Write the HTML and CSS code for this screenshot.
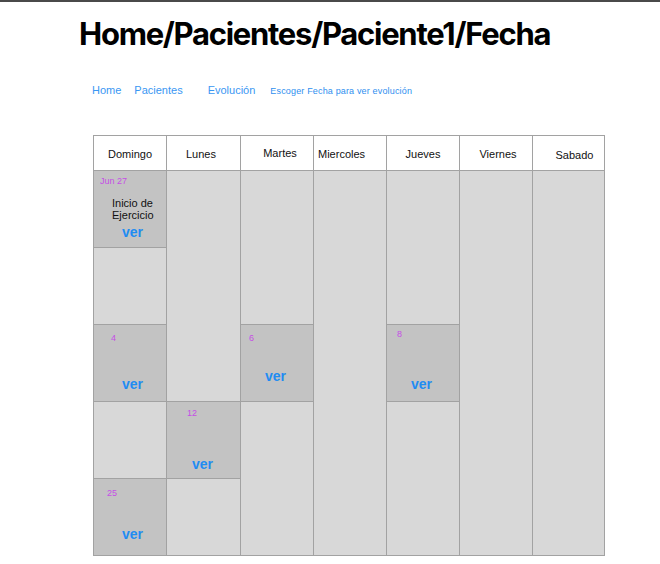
FILE: index.html
```html
<!DOCTYPE html>
<html lang="es">
<head>
<meta charset="utf-8">
<title>Fecha</title>
<link rel="stylesheet" href="styles.css">
</head>
<body>
<div class="page">
  <h1 class="title">Home/Pacientes/Paciente1/Fecha</h1>
  <nav class="crumbs">
    <a class="crumb crumb-home" href="#">Home</a>
    <a class="crumb crumb-pac" href="#">Pacientes</a>
    <a class="crumb crumb-evo" href="#">Evolución</a>
    <span class="crumb crumb-hint">Escoger Fecha para ver evolución</span>
  </nav>
  <div class="calendar">
    <div class="head h-dom">Domingo</div>
    <div class="cell day slot-jun27">
      <span class="date">Jun 27</span>
      <span class="note">Inicio de<br>Ejercicio</span>
      <a class="ver" href="#">ver</a>
    </div>
    <div class="cell"></div>
    <div class="cell day slot-4">
      <span class="date">4</span>
      <a class="ver" href="#">ver</a>
    </div>
    <div class="cell"></div>
    <div class="cell day slot-25">
      <span class="date">25</span>
      <a class="ver" href="#">ver</a>
    </div>

    <div class="head h-lun">Lunes</div>
    <div class="cell span-3"></div>
    <div class="cell day slot-12">
      <span class="date">12</span>
      <a class="ver" href="#">ver</a>
    </div>
    <div class="cell"></div>

    <div class="head h-mar">Martes</div>
    <div class="cell span-2"></div>
    <div class="cell day slot-6">
      <span class="date">6</span>
      <a class="ver" href="#">ver</a>
    </div>
    <div class="cell span-2"></div>

    <div class="head h-mie">Miercoles</div>
    <div class="cell span-5"></div>

    <div class="head h-jue">Jueves</div>
    <div class="cell span-2"></div>
    <div class="cell day slot-8">
      <span class="date">8</span>
      <a class="ver" href="#">ver</a>
    </div>
    <div class="cell span-2"></div>

    <div class="head h-vie">Viernes</div>
    <div class="cell span-5"></div>

    <div class="head h-sab">Sabado</div>
    <div class="cell span-5"></div>
  </div>
</div>
</body>
</html>
```
FILE: styles.css
```css
* { box-sizing: border-box; }

html, body {
  margin: 0;
  padding: 0;
  background: #ffffff;
}

body {
  border-top: 2px solid #4a4a4a;
  font-family: "Liberation Sans", Arial, sans-serif;
  color: #000;
}

.page {
  display: flex;
  flex-direction: column;
  align-items: flex-start;
}

.title {
  margin: 13px 0 0 79px;
  font-family: Inter, "Liberation Sans", sans-serif;
  font-weight: 700;
  font-size: 31px;
  line-height: 38px;
  letter-spacing: -1.27px;
  color: #000;
}

.crumbs {
  display: flex;
  align-items: baseline;
  margin: 31px 0 0 92px;
  line-height: 13px;
}

.crumb {
  font-size: 11px;
  color: #3a97f3;
  text-decoration: none;
}

.crumb-pac { margin-left: 13px; }
.crumb-evo { margin-left: 25px; }
.crumb-hint {
  margin-left: 15px;
  font-size: 9px;
  letter-spacing: 0.16px;
  color: #2f8fef;
}

.calendar {
  margin: 37px 0 0 93px;
  display: grid;
  grid-template-columns: 73px 74px 73px 73px 73px 73px 72px;
  grid-template-rows: 35px repeat(5, 77px);
  grid-auto-flow: column;
  border-left: 1px solid #a2a2a2;
  border-top: 1px solid #a2a2a2;
}

.head {
  display: flex;
  align-items: center;
  justify-content: center;
  padding-top: 2px;
  background: #fff;
  border-right: 1px solid #a2a2a2;
  border-bottom: 1px solid #a2a2a2;
  font-size: 11px;
  color: #111;
}

.h-lun { padding-right: 5px; }
.h-mar { padding-left: 6px; padding-top: 0; }
.h-mie { justify-content: flex-start; padding-left: 4px; }
.h-vie { padding-left: 4px; }
.h-sab { padding-left: 12px; padding-top: 4px; }

.cell {
  background: #d8d8d8;
  border-right: 1px solid #a2a2a2;
  border-bottom: 1px solid #a2a2a2;
}

.span-2 { grid-row: span 2; }
.span-3 { grid-row: span 3; }
.span-5 { grid-row: span 5; }

.day {
  display: flex;
  flex-direction: column;
  align-items: flex-start;
  background: #c3c3c3;
}

.date {
  display: block;
  font-size: 9px;
  line-height: 11px;
  color: #c64ee6;
}

.note {
  display: block;
  font-size: 11px;
  line-height: 12px;
  color: #111;
}

.ver {
  display: block;
  font-size: 14px;
  font-weight: 700;
  line-height: 16px;
  color: #1f8cf2;
  text-decoration: none;
}

.slot-jun27 .date { margin: 5px 0 0 6px; }
.slot-jun27 .note { margin: 10px 0 0 18px; }
.slot-jun27 .ver  { margin: 3px 0 0 28px; }

.slot-4 .date { margin: 8px 0 0 17px; }
.slot-4 .ver  { margin: 32px 0 0 28px; }

.slot-25 .date { margin: 9px 0 0 13px; }
.slot-25 .ver  { margin: 27px 0 0 28px; }

.slot-12 .date { margin: 6px 0 0 20px; }
.slot-12 .ver  { margin: 37px 0 0 25px; }

.slot-6 .date { margin: 8px 0 0 8px; }
.slot-6 .ver  { margin: 24px 0 0 24px; }

.slot-8 .date { margin: 4px 0 0 10px; }
.slot-8 .ver  { margin: 36px 0 0 24px; }
```
